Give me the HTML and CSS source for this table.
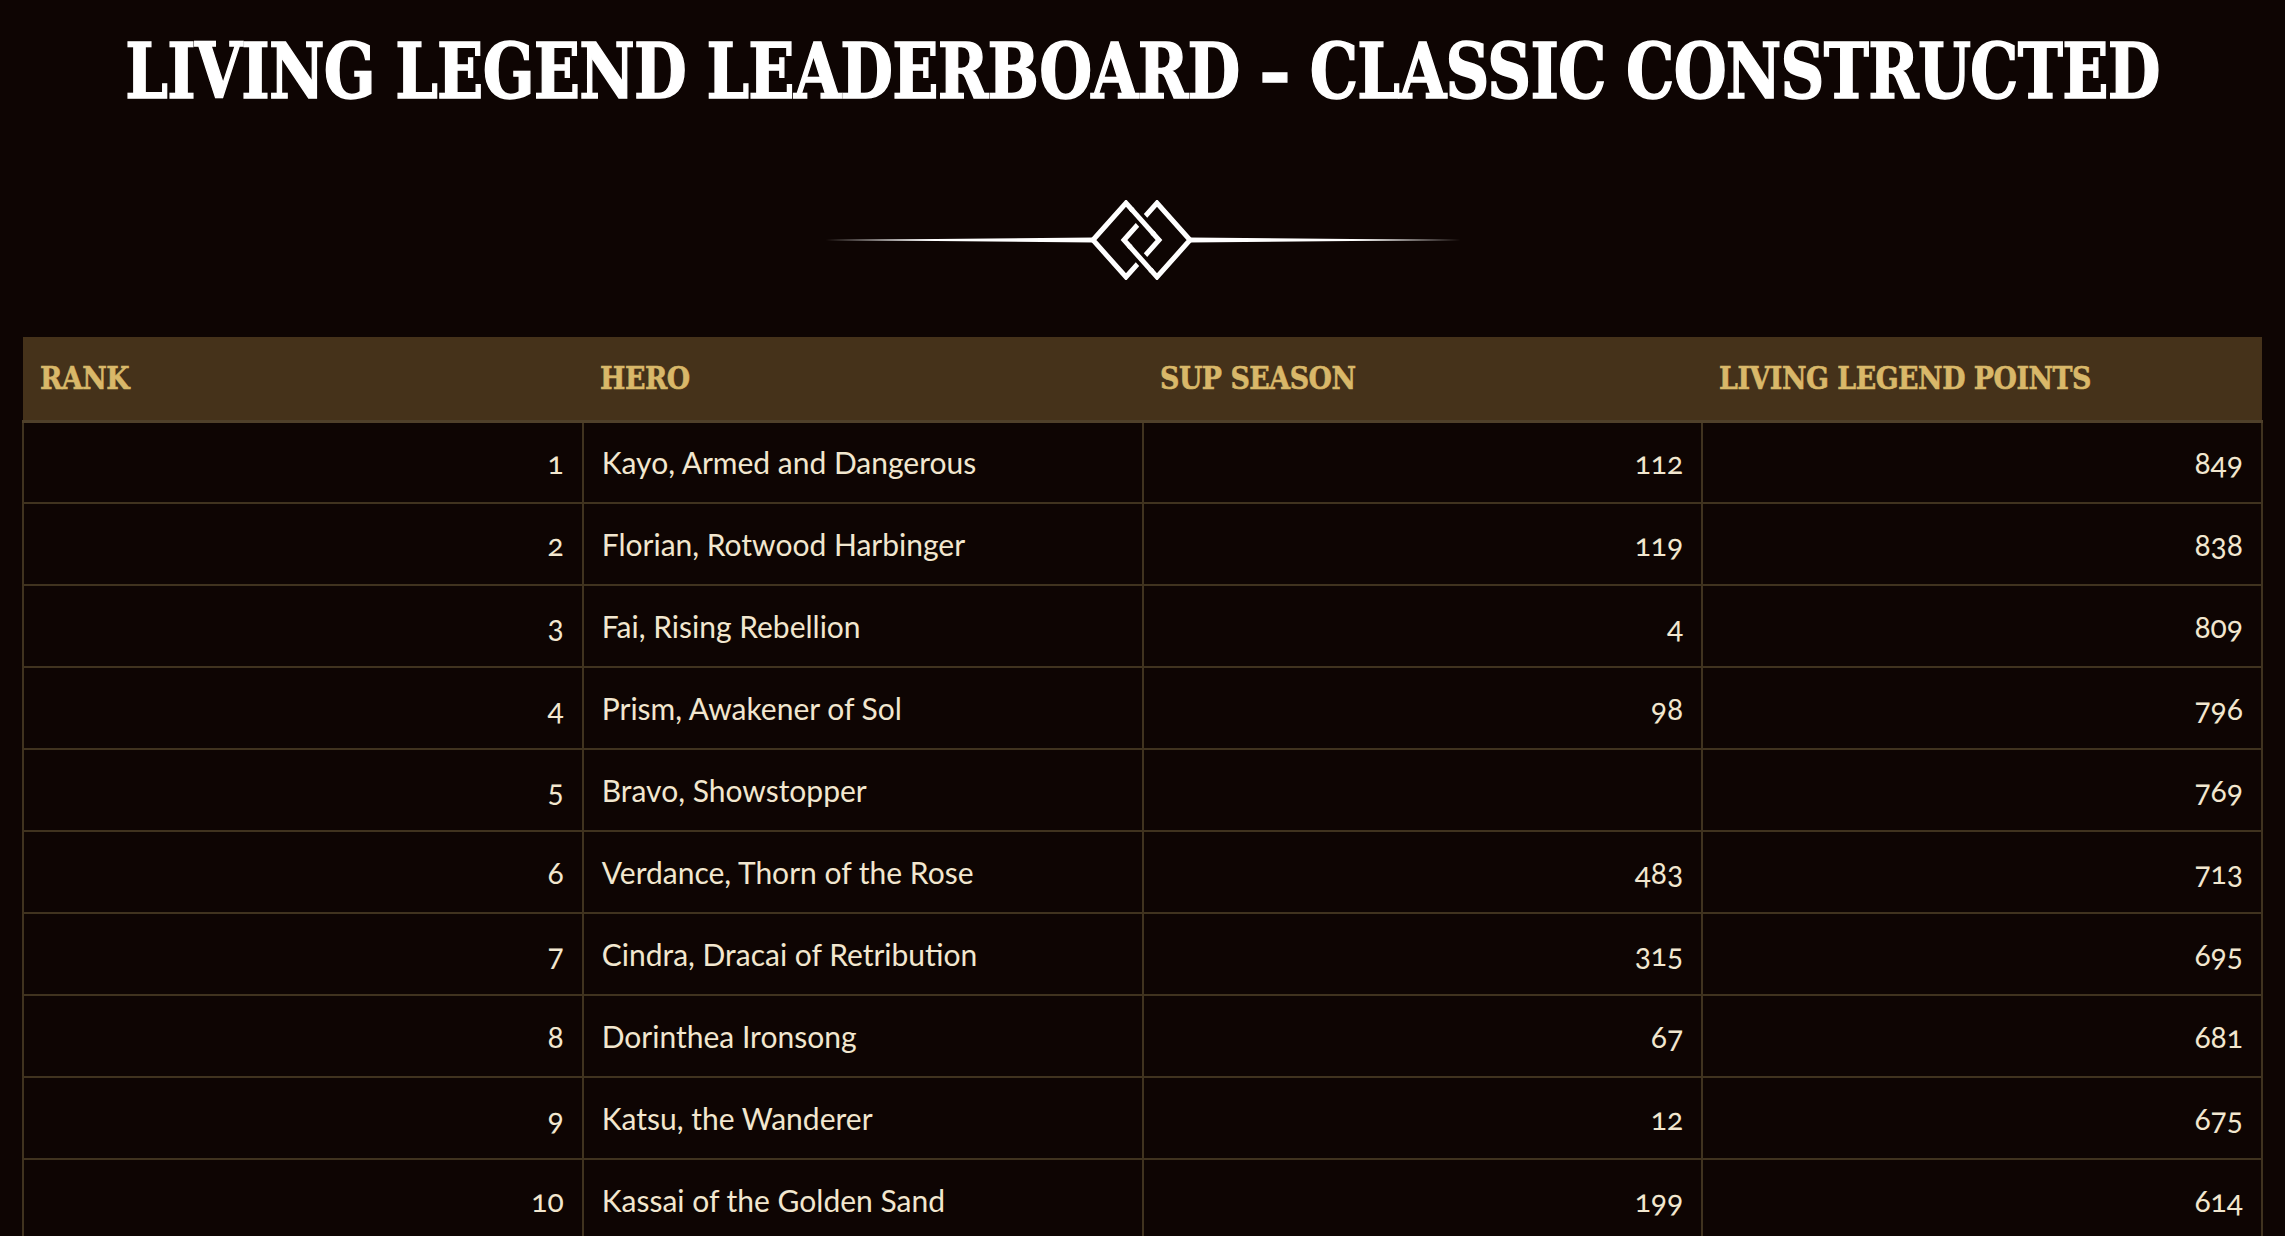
FILE: index.html
```html
<!DOCTYPE html>
<html lang="en">
<head>
<meta charset="utf-8">
<title>Living Legend Leaderboard – Classic Constructed</title>
<link rel="stylesheet" href="styles.css">
</head>
<body>
<header class="page-head">
  <h1 class="title">LIVING LEGEND LEADERBOARD – CLASSIC CONSTRUCTED</h1>
  <div class="ornament">
    <svg width="640" height="80" viewBox="0 0 640 80" aria-hidden="true">
      <polygon class="orn-fill" points="2,40 270,37.5 270,42.5"/>
      <polygon class="orn-fill" points="367,37.5 638,40 367,42.5"/>
      <polygon class="orn-line" points="270,40 303,3 336,40 303,77"/>
      <polygon class="orn-line" points="301,40 334,3 367,40 334,77"/>
      <line class="orn-halo" x1="309.6" y1="10.4" x2="329.4" y2="32.6"/>
      <line class="orn-line" x1="308" y1="8.6" x2="331" y2="34.4"/>
      <line class="orn-halo" x1="307.6" y1="47.4" x2="327.4" y2="69.6"/>
      <line class="orn-line" x1="306" y1="45.6" x2="329" y2="71.4"/>
    </svg>
  </div>
</header>
<main class="board">
  <table class="table">
    <thead>
      <tr>
        <th><span class="th-label">RANK</span></th>
        <th><span class="th-label">HERO</span></th>
        <th><span class="th-label">SUP SEASON</span></th>
        <th><span class="th-label">LIVING LEGEND POINTS</span></th>
      </tr>
    </thead>
    <tbody>
      <tr><td class="num">1</td><td class="hero">Kayo, Armed and Dangerous</td><td class="num">112</td><td class="num">849</td></tr>
      <tr><td class="num">2</td><td class="hero">Florian, Rotwood Harbinger</td><td class="num">119</td><td class="num">838</td></tr>
      <tr><td class="num">3</td><td class="hero">Fai, Rising Rebellion</td><td class="num">4</td><td class="num">809</td></tr>
      <tr><td class="num">4</td><td class="hero">Prism, Awakener of Sol</td><td class="num">98</td><td class="num">796</td></tr>
      <tr><td class="num">5</td><td class="hero">Bravo, Showstopper</td><td class="num"></td><td class="num">769</td></tr>
      <tr><td class="num">6</td><td class="hero">Verdance, Thorn of the Rose</td><td class="num">483</td><td class="num">713</td></tr>
      <tr><td class="num">7</td><td class="hero">Cindra, Dracai of Retribution</td><td class="num">315</td><td class="num">695</td></tr>
      <tr><td class="num">8</td><td class="hero">Dorinthea Ironsong</td><td class="num">67</td><td class="num">681</td></tr>
      <tr><td class="num">9</td><td class="hero">Katsu, the Wanderer</td><td class="num">12</td><td class="num">675</td></tr>
      <tr><td class="num">10</td><td class="hero">Kassai of the Golden Sand</td><td class="num">199</td><td class="num">614</td></tr>
    </tbody>
  </table>
</main>
</body>
</html>
```

FILE: styles.css
```css
* { box-sizing: border-box; }

html, body {
  margin: 0;
  padding: 0;
  background: #0e0503;
}

body {
  font-family: "Lato", "Liberation Sans", sans-serif;
  color: #f2e7cf;
  overflow: hidden;
}

.page-head {
  display: flex;
  flex-direction: column;
  align-items: center;
  padding-top: 30px;
}

.title {
  margin: 0;
  font-family: "DejaVu Serif", "Liberation Serif", serif;
  font-weight: 700;
  font-size: 76px;
  letter-spacing: -1px;
  line-height: 84px;
  color: #ffffff;
  -webkit-text-stroke: 1.5px #ffffff;
  white-space: nowrap;
  transform: scaleX(0.80);
}

.ornament {
  display: flex;
  justify-content: center;
  margin-top: 86px;
  height: 80px;
}

.orn-fill { fill: #ffffff; }
.orn-line { fill: none; stroke: #ffffff; stroke-width: 5; }
.orn-halo { fill: none; stroke: #0e0503; stroke-width: 12; }

.board {
  padding: 57px 22px 0;
}

.table {
  width: 100%;
  border-collapse: collapse;
  table-layout: fixed;
}

.table th {
  background: #45321a;
  color: #d9b869;
  font-family: "DejaVu Serif", "Liberation Serif", serif;
  font-weight: 700;
  font-size: 32px;
  text-align: left;
  height: 84px;
  padding: 0 17px;
  border-bottom: 3px solid #4f402a;
  white-space: nowrap;
}

.th-label {
  display: inline-block;
  transform: scaleX(0.84);
  transform-origin: left center;
  letter-spacing: -0.6px;
  -webkit-text-stroke: 0.6px #d9b869;
}

.table td {
  height: 82px;
  padding: 0 18px;
  border: 2px solid #40331f;
  font-size: 30px;
  vertical-align: middle;
}

.table td.num {
  text-align: right;
  font-variant-numeric: oldstyle-nums;
}

.table td.hero {
  text-align: left;
}
```
